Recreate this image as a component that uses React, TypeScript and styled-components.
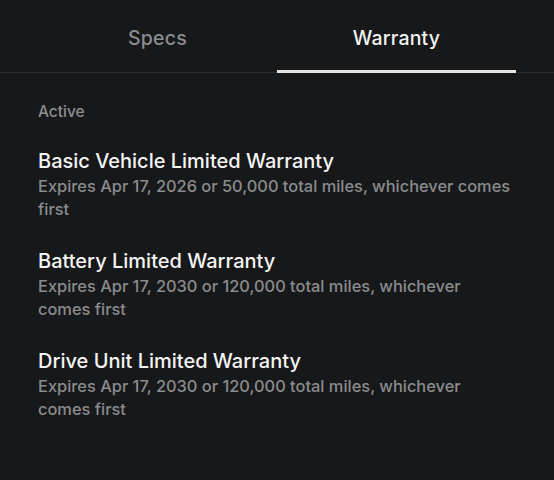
import React, { useState } from 'react'
import styled, { createGlobalStyle } from 'styled-components'

const GlobalStyle = createGlobalStyle`
  html, body {
    margin: 0;
    padding: 0;
    background: #171819;
  }
  body {
    font-family: Inter, 'Noto Sans', sans-serif;
    -webkit-font-smoothing: antialiased;
  }
`

const Page = styled.div`
  width: 554px;
  height: 480px;
  background: #171819;
  color: #ececec;
  overflow: hidden;
`

const TabBar = styled.div`
  display: flex;
  padding: 0 38px;
  border-bottom: 1px solid #2b2c2e;
`

const Tab = styled.button<{ $active?: boolean }>`
  flex: 1;
  height: 73px;
  padding: 6px 0 0;
  background: none;
  border: none;
  border-bottom: 3px solid ${(p) => (p.$active ? '#e4e4e4' : 'transparent')};
  margin-bottom: -1px;
  color: ${(p) => (p.$active ? '#f2f2f2' : '#8b8c8e')};
  font-family: inherit;
  font-size: 19.5px;
  font-weight: 500;
  letter-spacing: 0.2px;
  cursor: pointer;
`

const Content = styled.div`
  padding: 29px 38px 0;
`

const SectionLabel = styled.div`
  font-size: 15.5px;
  font-weight: 500;
  color: #8d8e90;
  margin-bottom: 27px;
`

const List = styled.div`
  display: flex;
  flex-direction: column;
  gap: 27px;
`

const Item = styled.div`
  display: flex;
  flex-direction: column;
`

const Title = styled.div`
  font-size: 20px;
  font-weight: 500;
  color: #f4f4f4;
  line-height: 26px;
  margin-bottom: 1px;
`

const Detail = styled.div`
  font-size: 16.4px;
  font-weight: 500;
  color: #8a8b8d;
  line-height: 23px;
  max-width: 478px;
`

const warranties = [
  {
    name: 'Basic Vehicle Limited Warranty',
    detail: 'Expires Apr 17, 2026 or 50,000 total miles, whichever comes first'
  },
  {
    name: 'Battery Limited Warranty',
    detail: 'Expires Apr 17, 2030 or 120,000 total miles, whichever comes first'
  },
  {
    name: 'Drive Unit Limited Warranty',
    detail: 'Expires Apr 17, 2030 or 120,000 total miles, whichever comes first'
  }
]

export default function App() {
  const [tab, setTab] = useState('warranty')

  return (
    <>
      <GlobalStyle />
      <Page>
        <TabBar>
          <Tab $active={tab === 'specs'} onClick={() => setTab('specs')}>
            Specs
          </Tab>
          <Tab $active={tab === 'warranty'} onClick={() => setTab('warranty')}>
            Warranty
          </Tab>
        </TabBar>
        <Content>
          <SectionLabel>Active</SectionLabel>
          <List>
            {warranties.map((w) => (
              <Item key={w.name}>
                <Title>{w.name}</Title>
                <Detail>{w.detail}</Detail>
              </Item>
            ))}
          </List>
        </Content>
      </Page>
    </>
  )
}
